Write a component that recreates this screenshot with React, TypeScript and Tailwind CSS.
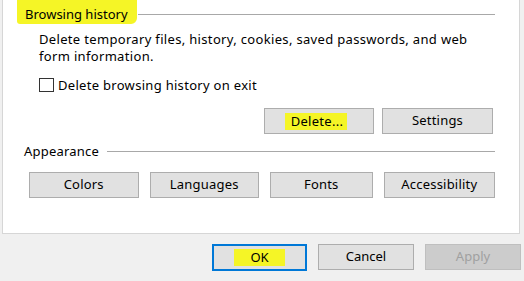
import React from "react";

const font = { fontFamily: '"Noto Sans", "Segoe UI", Arial, sans-serif' };

function Btn({ children, className = "" }: { children: React.ReactNode; className?: string }) {
  return (
    <div
      className={`flex items-center justify-center h-[26px] bg-[#e1e1e1] border border-[#adadad] text-[13px] text-black ${className}`}
    >
      {children}
    </div>
  );
}

export default function App() {
  return (
    <div
      className="w-[524px] h-[281px] bg-[#f0f0f0] overflow-hidden flex flex-col pl-[2px] pr-[4px] text-black"
      style={font}
    >
      <div className="h-[234px] bg-white border-l border-r border-b border-[#d6d6d6] flex flex-col pl-[22px] pr-[24px]">
        {/* Browsing history heading */}
        <div className="flex items-center h-[20px] mt-[4px]">
          <span className="text-[13px] leading-[20px] bg-[#f5f526] -ml-[8px] pl-[8px] pr-[9px] -mt-[4px] pt-[4px] rounded-br-[6px] rounded-bl-[3px]">
            Browsing history
          </span>
          <div className="flex-1 h-px bg-[#a8a8a8] ml-[1px]"></div>
        </div>
        {/* description */}
        <div className="pl-[14px] mt-[7px] text-[13px] leading-[17px] tracking-[0.33px]">
          Delete temporary files, history, cookies, saved passwords, and web
          <br />
          form information.
        </div>
        {/* checkbox row */}
        <div className="flex items-center pl-[14px] mt-[12px] h-[16px]">
          <div className="w-[15px] h-[14px] border border-[#333333] bg-white"></div>
          <span className="ml-[4px] text-[13px] leading-[16px] tracking-[0.3px]">Delete browsing history on exit</span>
        </div>
        {/* Delete / Settings */}
        <div className="flex justify-end gap-[8px] mt-[15px] pr-[2px]">
          <Btn className="w-[110px] h-[26px]">
            <span className="bg-[#f5f526] pl-[6px] pr-[4px] leading-[17px] -ml-[6px] tracking-[0.3px]">Delete...</span>
          </Btn>
          <Btn className="w-[111px] tracking-[0.2px]">Settings</Btn>
        </div>
        {/* Appearance heading */}
        <div className="flex items-center h-[20px] mt-[7px] -ml-[1px]">
          <span className="text-[13px] leading-[20px] tracking-[0.2px]">Appearance</span>
          <div className="flex-1 h-px bg-[#a8a8a8] ml-[8px]"></div>
        </div>
        {/* Appearance buttons */}
        <div className="flex gap-[11px] mt-[11px] pl-[4px] tracking-[0.2px]">
          <Btn className="w-[110px]">Colors</Btn>
          <Btn className="w-[110px]">Languages</Btn>
          <Btn className="w-[103px]">Fonts</Btn>
          <Btn className="w-[112px]">Accessibility</Btn>
        </div>
      </div>
      {/* bottom buttons */}
      <div className="flex justify-end gap-[11px] mt-[10px] -mr-[1px]">
        <div className="w-[95px] h-[27px] border-2 border-[#0078d7] bg-[#e1e1e1] flex items-center justify-center text-[13px]">
          <span className="bg-[#f5f526] px-[16px] leading-[17px]">OK</span>
        </div>
        <Btn className="w-[96px] h-[26px]">Cancel</Btn>
        <div className="w-[96px] h-[26px] bg-[#cccccc] border border-[#bfbfbf] flex items-center justify-center text-[13px] text-[#a0a0a0]">
          Apply
        </div>
      </div>
    </div>
  );
}
